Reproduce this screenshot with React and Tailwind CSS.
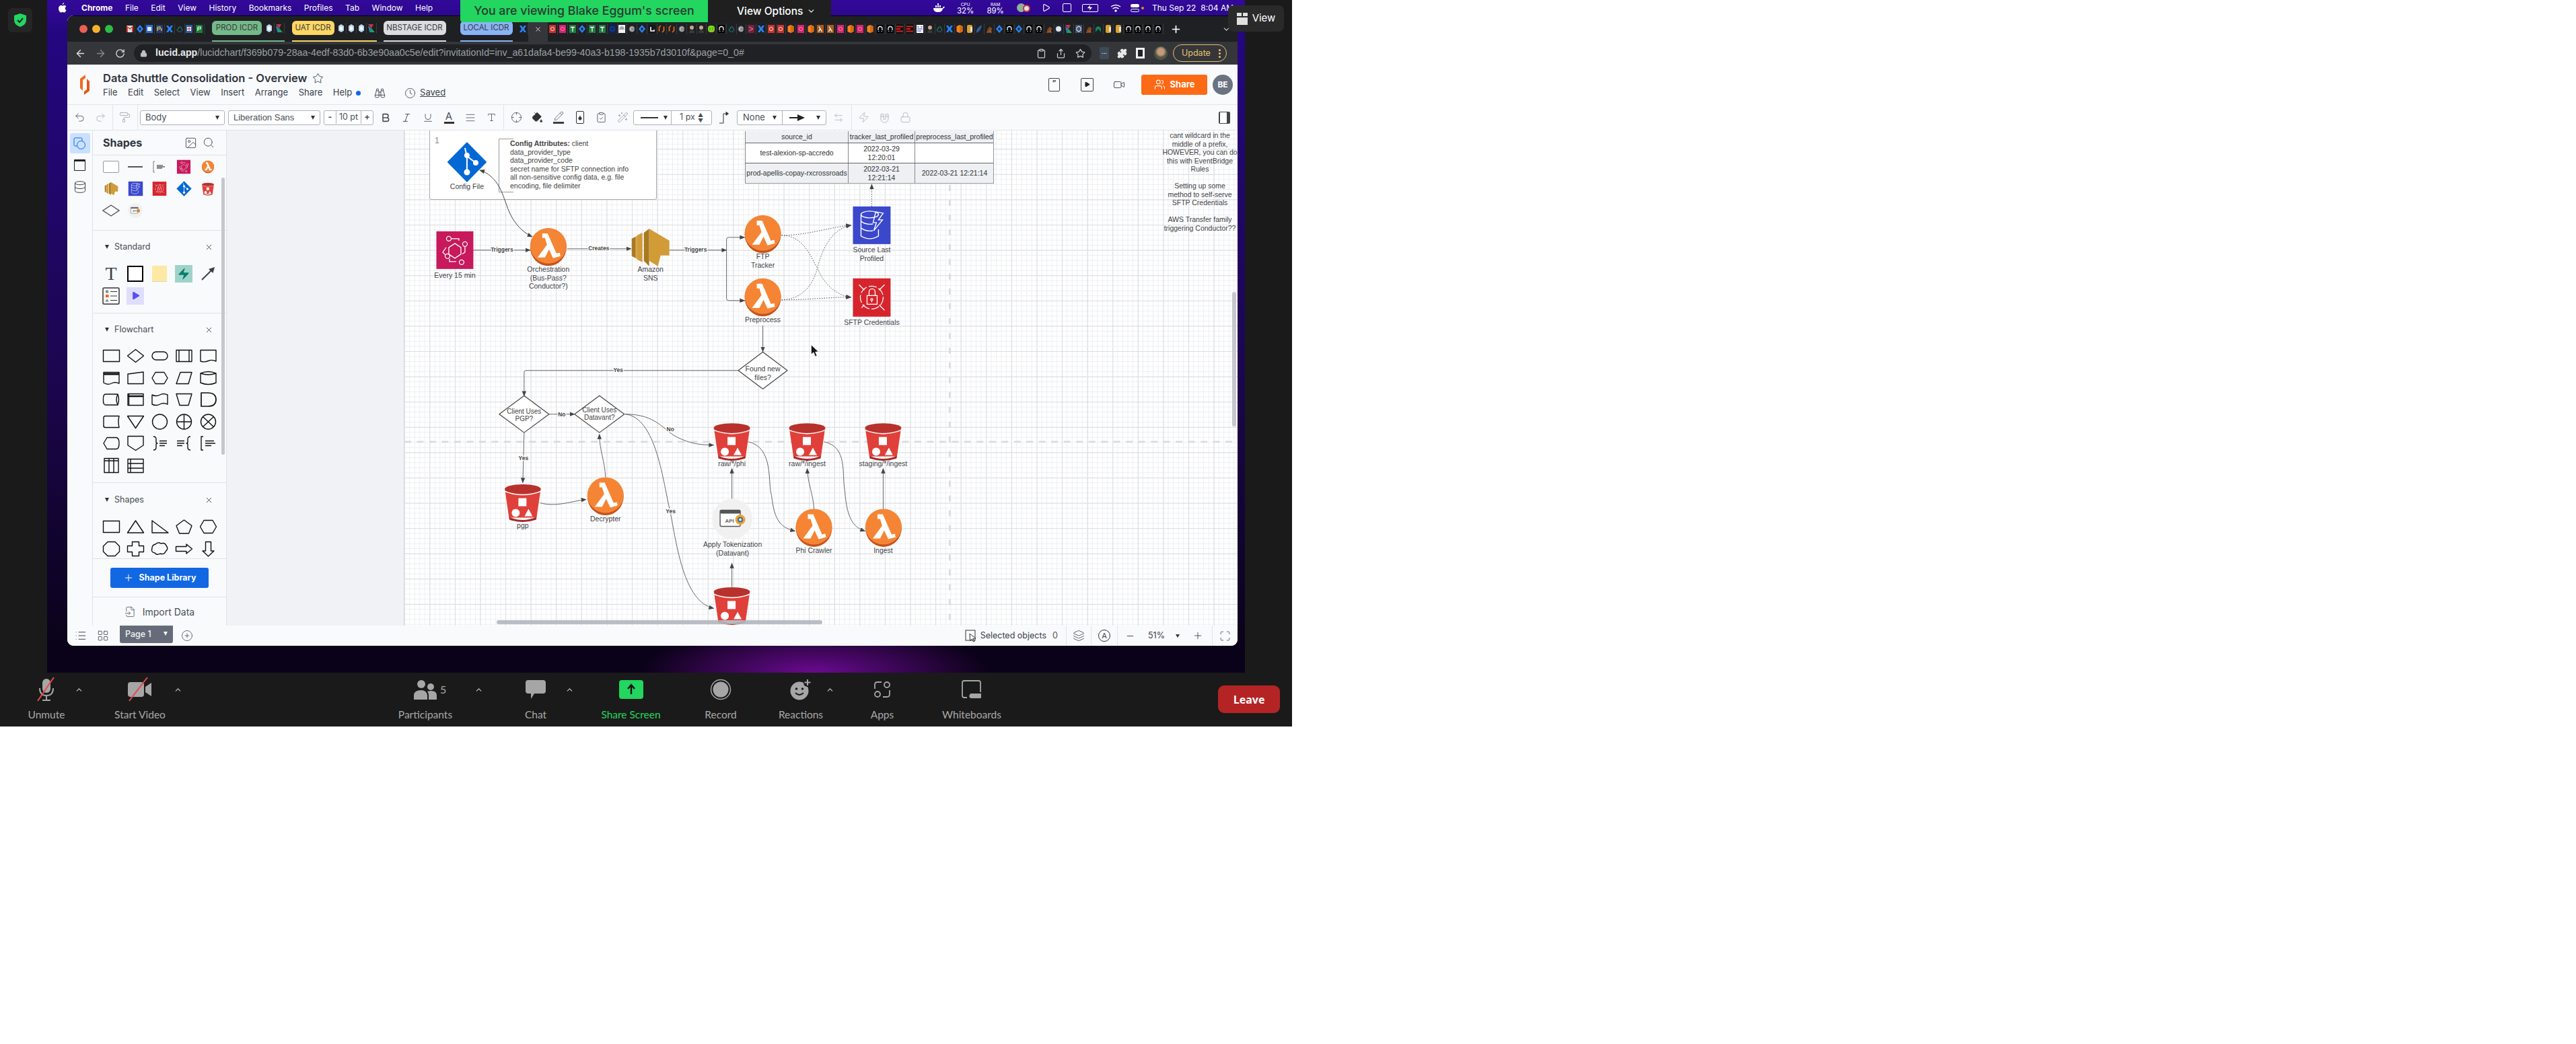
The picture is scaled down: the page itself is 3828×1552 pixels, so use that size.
import React from 'react';
import { ArrowLeft, ArrowRight, RotateCw, Lock, Clipboard, Share, Star, Puzzle, Plus, ChevronDown, ChevronUp, Undo2, Redo2, PaintRoller, Bold, Italic, Underline, AlignJustify, Type, Crosshair, PaintBucket, Pencil, Droplet, ClipboardCheck, WandSparkles, ArrowLeftRight, Zap, Magnet, PanelRight, Video, Play, Users, Binoculars, Clock, Image, Search, X, List, LayoutGrid, CirclePlus, Layers, Minus, Maximize, Database, FileInput, Lock as LockIcon } from 'lucide-react';

const Fav = ({ k }) => {
  const m = {
    aws: <><rect y="1" width="10" height="12" fill="#c7352e" /><circle cx="5" cy="7" r="2.6" fill="none" stroke="#fff" strokeWidth=".8" /></>,
    pink: <><rect y="1" width="10" height="12" fill="#d6246e" /><circle cx="5" cy="7" r="2.6" fill="none" stroke="#f9c" strokeWidth=".8" /></>,
    gt: <><rect y="1" width="10" height="12" fill="#1e7e3e" /><path d="M2 4.500H8M5 4.500V11" stroke="#fff" strokeWidth="1.300" /></>,
    dia: <><path d="M5 1L10 7L5 13L0 7Z" fill="#2684ff" /><path d="M5 4.500L7 7L5 9.500L3 7Z" fill="#202124" /></>,
    navy: <><rect y="1" width="10" height="12" rx="1" fill="#0c2460" /><circle cx="5" cy="7" r="3" fill="none" stroke="#1c3f96" strokeWidth="1.400" /></>,
    cloud: <><rect y="1" width="10" height="12" fill="#f1f1f1" /><path d="M1 8Q2 3 5 3Q8 3 9 8Z" fill="#a8a8a8" /></>,
    e: <><circle cx="5" cy="7" r="4.500" fill="#5f6368" /><path d="M8 5.500A3 3 0 1 0 8 8.800M3 7H8" stroke="#ddd" strokeWidth="1.100" fill="none" /></>,
    l: <><rect y="1" width="10" height="12" fill="#16171a" /><path d="M3 4V10H8V8" stroke="#fff" strokeWidth="1.600" fill="none" /></>,
    lucid: <path d="M4 2L1.500 4.500V10.500M6 12L8.500 9.500V3.500" stroke="#f06a1a" strokeWidth="1.700" fill="none" />,
    face: <><circle cx="5" cy="5" r="3" fill="#c7a68c" /><path d="M1 13Q1 8.500 5 8.500Q9 8.500 9 13Z" fill="#3a3a3a" /></>,
    green: <><rect y="2" width="10" height="10" rx="4" fill="#7ed321" /><path d="M3 5V9M7 5V9" stroke="#4a9a10" /></>,
    gh: <><rect y="1" width="10" height="12" fill="#060606" /><path d="M2 9V6.500A3 3 0 0 1 8 6.500V9" stroke="#eee" strokeWidth="1.300" fill="none" /><path d="M2 10.500H3.500M6.500 10.500H8" stroke="#bbb" /></>,
    teal: <path d="M1 10Q4 3 6 4T9 10M2 11H8" stroke="#1d7a6e" strokeWidth="1.200" fill="none" />,
    maroon: <><rect y="1" width="10" height="12" fill="#7a1f3d" /><path d="M2 4L8 7L2 10" stroke="#d9a" fill="none" /></>,
    x: <path d="M0 2H3L5 5L7 2H10L7 7L10 12H7L5 9L3 12H0L3 7Z" fill="#2684ff" />,
    cyl: <><path d="M5 1L9.500 3V11L5 13L.5 11V3Z" fill="#f5821f" /><path d="M5 1L9.500 3V11L5 13Z" fill="#d86a10" /></>,
    lam: <><rect y="1" width="10" height="12" fill="#a85c1c" /><path d="M3 3.500L7.500 11M5 6.500L2.500 11" stroke="#fff" strokeWidth="1.300" fill="none" /></>,
    red: <><rect width="10" height="14" y="0" fill="#111" /><path d="M0 3.500H10M0 7H6M0 10.500H10" stroke="#d8201f" strokeWidth="2" /></>,
    white: <><rect y="1" width="10" height="12" fill="#fff" /><path d="M1 4H4M6 4H9M1 7H9M1 10H7" stroke="#2238a8" strokeWidth="1.200" /></>,
    can: <><rect y="1" x="1" width="8" height="12" rx="2" fill="#d8a02a" /><rect y="4" x="6" width="3" height="7" fill="#e4e4e4" /></>,
    feather: <path d="M9 1Q8 10 1 13Q0 6 9 1Z" fill="#2f5f9e" />,
    stack: <path d="M1 12H9M2 10L8 10.500M2.500 8L8 9.500M3.500 6L8.500 8M5 4L9 7" stroke="#e0702a" strokeWidth="1" fill="none" />,
    py: <><rect y="1" width="10" height="12" fill="#1f2b3a" /><circle cx="5" cy="7" r="4" fill="#dfe5ea" /></>,
    multi: <><path d="M0 1L8 1L5 7Z" fill="#c43a3a" /><path d="M0 3L5 7L2 13Z" fill="#3a7ac4" /><path d="M5 7L10 13H2Z" fill="#22a060" /></>,
    hex: <><rect y="1" width="10" height="12" fill="#41546e" /><path d="M5 3L8 5V9L5 11L2 9V5Z" fill="none" stroke="#dde" strokeWidth="1.100" /></>,
    n: <path d="M1 12V6Q5 0 9 6V12L5 7Z" fill="#15805f" />,
    gmail: <><rect y="2" width="10" height="10" fill="#ddd" /><path d="M0 2V12H2V5L5 8L8 5V12H10V2L5 6Z" fill="#d93a2e" /></>,
    cal: <><rect y="1" width="10" height="12" fill="#2a6fd6" /><rect x="2" y="4" width="6" height="6" fill="#dce8ff" /></>,
    yp: <><rect y="1" width="10" height="12" fill="#273a78" /><path d="M2 4V10M2 4H6V7H2M8 6V10" stroke="#f0d24a" strokeWidth="1.200" fill="none" /></>,
    pg: <><rect y="1" width="10" height="12" fill="#188038" /><path d="M3 4V10M3 4H7V7H3" stroke="#fff" strokeWidth="1.200" fill="none" /></>,
    tb: <><rect y="1" width="10" height="12" fill="#2d5da8" /><path d="M2 4H8V10H2Z" fill="#fff" /><path d="M5 4V10M2 7H8" stroke="#c33" /></>,
    hexb: <><path d="M5 1L9 3.500V10.500L5 13L1 10.500V3.500Z" fill="#bcd8ef" /><path d="M5 4L7 6V9L5 10L3 9V6Z" fill="#fff" /></>,
  };
  return (
    <span className="w-[14.75px] h-[16px] shrink-0 flex items-center justify-center border-r border-[#3a3b3e]">
      <svg width="10" height="14" viewBox="0 0 10 14">{m[k]}</svg>
    </span>
  );
};

const favsA = ['gmail','dia','cal','yp','x','teal','tb','pg'];
const favsB = ['aws','pink','gt','dia','gt','gt','navy','cloud','e','dia','l','lucid','lucid','e','face','face','green','gh','teal','e','maroon','x','aws','aws','cyl','pink','cyl','lam','lam','pink','cyl','pink','cyl','gh','gh','red','red','white','face','teal','x','cyl','can','feather','stack','dia','gh','dia','gh','gh','stack','py','multi','hex','stack','n','can','can','gh','gh','gh','gh'];

const TabGroup = ({ label, pill, line, w, icons = [] }) => (
  <div className={`h-full flex items-center border-b-2 ${line}`}>
    <div className={`h-[21px] ${w} ${pill} rounded-[6px] flex items-center justify-center text-[#3a3a3a] text-[11.5px] whitespace-nowrap mb-[1px]`}>{label}</div>
    {icons.length > 0 && <div className="flex ml-[4px]">{icons.map((k, i) => <Fav key={i} k={k} />)}</div>}
  </div>
);

const TabStrip = () => (
  <div className="h-[39px] bg-[#1f2023] rounded-t-[9px] border-t border-[#000] flex items-center text-white shrink-0">
    <div className="flex gap-[7px] ml-[18px]">
      <span className="w-[12px] h-[12px] rounded-full bg-[#ec5f56]" />
      <span className="w-[12px] h-[12px] rounded-full bg-[#f4b22c]" />
      <span className="w-[12px] h-[12px] rounded-full bg-[#2fbb45]" />
    </div>
    <div className="flex ml-[18px]">{favsA.map((k, i) => <Fav key={i} k={k} />)}</div>
    <div className="ml-[11px] h-full"><TabGroup label="PROD ICDR" pill="bg-[#74b98a]" line="border-[#74b98a]" w="w-[74px]" icons={['hexb','multi']} /></div>
    <div className="ml-[11px] h-full"><TabGroup label="UAT ICDR" pill="bg-[#fdd663]" line="border-[#fdd663]" w="w-[63px]" icons={['hexb','hexb','hexb','multi']} /></div>
    <div className="ml-[10px] h-full"><TabGroup label="NBSTAGE ICDR" pill="bg-[#dadce0]" line="border-[#dadce0]" w="w-[93px]" /></div>
    <div className="ml-[21px] h-full"><TabGroup label="LOCAL ICDR" pill="bg-[#8ab4f8]" line="border-[#8ab4f8]" w="w-[78px]" /></div>
    <div className="ml-[9px]"><Fav k="x" /></div>
    <div className="h-full w-[29px] bg-[#35363a] rounded-t-[7px] flex items-center justify-center"><X size={11} strokeWidth={2} className="text-[#e8eaed]" /></div>
    <div className="flex">{favsB.map((k, i) => <Fav key={i} k={k} />)}</div>
    <Plus size={17} strokeWidth={2.4} className="ml-[10px] text-white" />
    <ChevronDown size={13} strokeWidth={2.2} className="ml-[60px] text-[#d0d0d0]" />
  </div>
);

const AddressBar = () => (
  <div className="h-[34px] bg-[#35363a] flex items-center text-[#dfe1e5] shrink-0">
    <div className="flex items-center ml-[11px] gap-[13px]">
      <ArrowLeft size={17} />
      <ArrowRight size={17} className="text-[#85878b]" />
      <RotateCw size={15} />
    </div>
    <div className="ml-[13px] w-[1423px] h-[26px] rounded-full bg-[#202124] flex items-center pl-[9px] text-[14.2px] [font-family:'Liberation_Sans',sans-serif]">
      <Lock size={11} className="text-[#bdc1c6] mr-[12px]" fill="#bdc1c6" />
      <span className="whitespace-nowrap"><span className="text-[#e8eaed] font-bold">lucid.app</span><span className="text-[#9aa0a6]">/lucidchart/f369b079-28aa-4edf-83d0-6b3e90aa0c5e/edit?invitationId=inv_a61dafa4-be99-40a3-b198-1935b7d3010f&amp;page=0_0#</span></span>
      <div className="ml-auto flex items-center gap-[14px] pr-[9px] text-[#c8cacd]">
        <Clipboard size={15} />
        <Share size={15} />
        <Star size={15} />
      </div>
    </div>
    <div className="ml-[12px] w-[14px] h-[18px] bg-[#3f4a58] rounded-[2px] flex items-center justify-center text-[8px] leading-none text-white font-bold">···</div>
    <Puzzle size={15} className="ml-[12px] text-[#e8e8e8]" fill="#e8e8e8" />
    <span className="ml-[13px] w-[13px] h-[16px] border-[3px] border-[#f2f2f2] bg-[#202124]" />
    <span className="ml-[14px] w-[20px] h-[20px] rounded-full bg-[radial-gradient(circle_at_50%_40%,#c49a78_0,#c49a78_30%,#4a5240_55%,#6a6a5a_100%)]" />
    <div className="ml-[8px] w-[80px] h-[26px] rounded-full border border-[#e0c36c] flex items-center justify-between pl-[12px] pr-[8px] text-[#e6c46a] text-[12.5px]">
      <span>Update</span>
      <span className="flex flex-col gap-[2px]"><i className="block w-[3px] h-[3px] rounded-full bg-[#e6c46a]" /><i className="block w-[3px] h-[3px] rounded-full bg-[#e6c46a]" /><i className="block w-[3px] h-[3px] rounded-full bg-[#e6c46a]" /></span>
    </div>
  </div>
);

const LucidHeader = () => (
  <div className="h-[60px] bg-[#f9fafc] border-b border-[#e2e4ea] flex shrink-0 text-[#3a414a]">
    <div className="w-[53px] flex items-center justify-center pr-[2px]">
      <svg width="20" height="36" viewBox="0 0 20 36"><path d="M11 3L3 9V23L7 27V11L11 8Z" fill="#f26b1d" /><path d="M9 33L17 27V13L13 9V25L9 28Z" fill="#e2591a" /></svg>
    </div>
    <div className="flex flex-col pt-[8px]">
      <div className="h-[24px] flex items-center gap-[8px]">
        <span className="text-[16.500px] font-semibold text-[#2f353d] whitespace-nowrap">Data Shuttle Consolidation - Overview</span>
        <Star size={17} strokeWidth={1.3} className="text-[#3a414a]" />
      </div>
      <div className="h-[20px] flex items-center gap-[15.500px] text-[13px]">
        <span>File</span><span>Edit</span><span>Select</span><span>View</span><span>Insert</span><span>Arrange</span><span>Share</span>
        <span className="flex items-center gap-[6px]">Help<i className="w-[7px] h-[7px] rounded-full bg-[#1068e8]" /></span>
        <Binoculars size={17} strokeWidth={1.3} className="ml-[4px]" />
        <span className="flex items-center gap-[6px] ml-[13px]"><Clock size={17} strokeWidth={1.2} /><span className="underline">Saved</span></span>
      </div>
    </div>
    <div className="ml-auto flex items-center pr-[7px]">
      <div className="w-[17px] h-[20px] border border-[#444] rounded-[2px] flex items-center justify-center text-[11px] font-bold leading-none pb-[4px] mr-[31px]">”</div>
      <div className="w-[19px] h-[20px] border border-[#444] rounded-[2px] flex items-center justify-center mr-[29px]"><Play size={9} fill="#222" className="text-[#222]" /></div>
      <Video size={18} strokeWidth={1.2} className="mr-[24px]" />
      <div className="w-[98px] h-[30px] rounded-[3px] bg-[#fc6a15] text-white font-bold text-[13px] flex items-center justify-center gap-[7px]"><Users size={17} strokeWidth={1.5} /><span>Share</span></div>
      <div className="ml-[8px] w-[30px] h-[30px] rounded-full bg-[#6b7280] text-white font-bold text-[12px] flex items-center justify-center">BE</div>
    </div>
  </div>
);

const Slot = ({ children, w = 'w-[31px]', ml = '' }) => <div className={`${w} ${ml} flex items-center justify-center shrink-0`}>{children}</div>;
const Sep = ({ ml = '' }) => <div className={`w-px h-full bg-[#e2e4ea] shrink-0 ${ml}`} />;
const Tri = () => <span className="w-0 h-0 border-l-[3.500px] border-r-[3.500px] border-t-[6px] border-l-transparent border-r-transparent border-t-[#333]" />;

const Toolbar = () => (
  <div className="h-[38px] bg-[#f9fafc] border-b border-[#e2e4ea] flex items-center shrink-0 text-[#4a4f57] text-[13px]">
    <Slot ml="ml-[2.500px]"><Undo2 size={17} strokeWidth={1.2} /></Slot>
    <Slot><Redo2 size={17} strokeWidth={1.2} className="text-[#aaaeb6]" /></Slot>
    <Sep ml="ml-[2.500px]" />
    <Slot ml="ml-[1.500px]"><PaintRoller size={17} strokeWidth={1.2} className="text-[#9ca0a8]" /></Slot>
    <Sep ml="ml-[3.500px]" />
    <div className="ml-[3px] w-[126px] h-[22px] border border-[#b0b3ba] rounded-[3px] bg-white flex items-center justify-between px-[7px]"><span>Body</span><Tri /></div>
    <div className="ml-[5px] w-[137px] h-[22px] border border-[#b0b3ba] rounded-[3px] bg-white flex items-center justify-between px-[7px] [font-family:'Liberation_Sans',sans-serif]"><span>Liberation Sans</span><Tri /></div>
    <div className="ml-[5px] w-[74px] h-[22px] border border-[#b0b3ba] rounded-[3px] bg-white flex items-center text-[12.500px]"><span className="w-[18px] text-center border-r border-[#b0b3ba] font-bold">-</span><span className="flex-1 text-center whitespace-nowrap">10 pt</span><span className="w-[18px] text-center border-l border-[#b0b3ba] font-bold">+</span></div>
    <Slot ml="ml-[2.500px]"><Bold size={16} strokeWidth={2.4} /></Slot>
    <Slot><Italic size={16} strokeWidth={1.5} /></Slot>
    <Slot ml="ml-[1px]"><Underline size={16} strokeWidth={1.3} /></Slot>
    <Slot><span className="flex flex-col items-center leading-none"><span className="text-[15px]">A</span><i className="block w-[15px] h-[3px] bg-[#333] mt-[1px]" /></span></Slot>
    <Slot ml="ml-[1px]"><AlignJustify size={16} strokeWidth={1.2} /></Slot>
    <Slot><Type size={15} strokeWidth={1.3} /></Slot>
    <Sep ml="ml-[2.500px]" />
    <Slot w="w-[31.600px]" ml="ml-[2.500px]"><Crosshair size={17} strokeWidth={1.2} /></Slot>
    <Slot w="w-[31.600px]"><PaintBucket size={17} strokeWidth={1.4} fill="#333" /></Slot>
    <Slot w="w-[31.600px]"><span className="flex flex-col items-center"><Pencil size={15} strokeWidth={1.2} /><i className="block w-[16px] h-[3px] bg-[#3a4048] mt-[1px]" /></span></Slot>
    <Slot w="w-[31.600px]"><span className="w-[12px] h-[19px] border border-[#333] rounded-[2px] flex items-center justify-center"><Droplet size={8} fill="#333" /></span></Slot>
    <Slot w="w-[31.600px]"><ClipboardCheck size={17} strokeWidth={1.2} /></Slot>
    <Slot w="w-[31.600px]"><WandSparkles size={17} strokeWidth={1.1} className="text-[#8d9199]" /></Slot>
    <div className="w-[117px] h-[22px] border border-[#b0b3ba] rounded-[3px] bg-white flex items-center shrink-0">
      <div className="w-[56px] h-full flex items-center justify-between pl-[10px] pr-[5px] border-r border-[#b0b3ba]"><i className="block w-[26px] h-[2px] bg-[#333]" /><Tri /></div>
      <span className="flex-1 text-center text-[12.500px] whitespace-nowrap flex items-center justify-center gap-[4px]">1 px<span className="text-[8px] leading-[8px] flex flex-col"><i className="not-italic">▲</i><i className="not-italic">▼</i></span></span>
    </div>
    <Slot ml="ml-[2.500px]"><svg width="18" height="20" viewBox="0 0 18 20" fill="none" stroke="#333"><path d="M2 18H8V4H14" /><path d="M12 1.500L15.500 4L12 6.500Z" fill="#333" /></svg></Slot>
    <div className="ml-[3.500px] w-[133px] h-[22px] border border-[#b0b3ba] rounded-[3px] bg-white flex items-center shrink-0">
      <div className="w-[67px] h-full flex items-center justify-between px-[8px] border-r border-[#b0b3ba]"><span>None</span><Tri /></div>
      <div className="flex-1 h-full flex items-center justify-between pl-[10px] pr-[8px]"><svg width="24" height="10" viewBox="0 0 24 10"><path d="M0 5H14" stroke="#222" strokeWidth="2" /><path d="M12 0L23 5L12 10Z" fill="#222" /></svg><Tri /></div>
    </div>
    <Slot ml="ml-[2.500px]"><ArrowLeftRight size={16} strokeWidth={1.1} className="text-[#a7abb2]" /></Slot>
    <Sep ml="ml-[3.500px]" />
    <Slot ml="ml-[1.500px]"><Zap size={17} strokeWidth={1.1} className="text-[#a7abb2]" /></Slot>
    <Slot><Magnet size={17} strokeWidth={1.1} className="text-[#a7abb2] rotate-[135deg]" /></Slot>
    <Slot><LockIcon size={17} strokeWidth={1.1} className="text-[#a7abb2]" /></Slot>
    <div className="ml-auto mr-[11px] w-[17px] h-[18px] border border-[#444] border-l-[2px] border-r-[5px] rounded-[2px] bg-white" />
  </div>
);

/* ---------- diagram icons, centred on 0,0 ---------- */
const Lambda = () => (
  <g>
    <ellipse cx="0" cy="0.500" rx="27" ry="28" fill="#c5521c" />
    <ellipse cx="0" cy="-1.500" rx="27" ry="26.500" fill="#f58534" />
    <path d="M-9 -20L-1 -20L12 10L17 9L18 14L7 17L1 4L-5 16L-16 16L-2 -3L-5 -13L-9 -13Z" fill="#fff" />
  </g>
);
const Bucket = () => (
  <g transform="translate(-27.500,-28)">
    <path d="M1 9L7 50H48L54 9Z" fill="#e0403a" />
    <path d="M7 49Q27.500 58 48 49L47.500 53Q27.500 60 7.500 53Z" fill="#a82a26" />
    <path d="M1 11Q27.500 21 54 11" stroke="#fff" strokeWidth="1.500" fill="none" />
    <ellipse cx="27.500" cy="7.500" rx="27" ry="7" fill="#b8322d" />
    <rect x="21" y="21" width="12" height="12" fill="#fff" />
    <circle cx="17" cy="43" r="6" fill="#fff" />
    <path d="M36 37L42 48H30Z" fill="#fff" />
  </g>
);
const EventIcon = () => (
  <g>
    <rect x="-27.500" y="-28" width="55" height="56" fill="#c7195b" />
    <g fill="none" stroke="#fff" strokeWidth="1.300">
      <path d="M0 -10L9 -4V6L0 12L-9 6V-4Z" />
      <circle cx="-9" cy="-17" r="3.500" /><circle cx="15" cy="-9" r="3.500" /><circle cx="-11" cy="9" r="3.500" /><circle cx="10" cy="18" r="3.500" />
      <path d="M-5 -17H6V-14M15 -5V3L11 6M-13 -4L-18 3L-14 7M-8 13V17H2" />
    </g>
  </g>
);
const SNSIcon = () => (
  <g>
    <path d="M-10 -22L-2 -28V28L-10 20Z" fill="#a87a20" />
    <path d="M-2 -28L28 -10V12L15 12L11 28L-2 20Z" fill="#d19b38" />
    <path d="M-20 -18L-12 -22V22L-20 18Z" fill="#d19b38" />
    <path d="M-28 -13L-22 -16V16L-28 13Z" fill="#a87a20" />
    <path d="M-22 -16L-20 -17V17L-22 16Z" fill="#d19b38" />
  </g>
);
const DynamoIcon = () => (
  <g>
    <rect x="-28" y="-28" width="56" height="56" fill="#3b48cc" />
    <g fill="none" stroke="#fff" strokeWidth="1.400">
      <ellipse cx="-3" cy="-16" rx="13" ry="5" />
      <path d="M-16 -16V16Q-3 24 10 16V6M-16 -6Q-8 0 2 -2M-16 4Q-8 10 2 8" />
      <path d="M6 -20L17 -18L10 -8L16 -8L3 8L7 -4L2 -4Z" />
    </g>
  </g>
);
const SecretsIcon = () => (
  <g>
    <rect x="-28" y="-28.500" width="56" height="57" fill="#d6242d" />
    <g fill="none" stroke="#fff" strokeWidth="1.300">
      <circle cx="0" cy="0" r="17" strokeDasharray="12 3" />
      <path d="M-19 -19L-11 -11M19 -19L11 -11M-15 15L-11 11M19 19L11 11" />
      <rect x="-7" y="-3" width="15" height="13" />
      <path d="M-4 -3V-8A4.500 5 0 0 1 5 -8V-3" />
      <circle cx="0" cy="3" r="1.500" /><path d="M0 5V7" />
    </g>
  </g>
);
const GitIcon = () => (
  <g>
    <path d="M0 -28.500L28 0L0 28.500L-28 0Z" fill="#0468d4" stroke="#0468d4" strokeWidth="2" strokeLinejoin="round" />
    <path d="M-3 -21L0 -8L0 15M1 -8L13 1" stroke="#fff" strokeWidth="2" fill="none" />
    <circle cx="0" cy="-10" r="4" fill="#fff" /><circle cx="13" cy="1" r="4" fill="#fff" /><circle cx="0" cy="15" r="4.500" fill="#fff" />
  </g>
);
const ApiIcon = () => (
  <g>
    <ellipse cx="0" cy="0" rx="30" ry="30" fill="#f1f1f1" />
    <rect x="-18" y="-13" width="30" height="24" rx="2" fill="#fff" stroke="#555" strokeWidth="1.400" />
    <rect x="-18" y="-13" width="30" height="5" rx="1.500" fill="#555" />
    <text x="-4" y="5" fontSize="8" fontWeight="700" fill="#666" textAnchor="middle">API</text>
    <circle cx="12" cy="1" r="7.500" fill="#f0a030" /><circle cx="12" cy="1" r="4" fill="#2f6ea8" /><circle cx="12" cy="1" r="2" fill="#f1f1f1" />
  </g>
);
const Mini = ({ w = 22, h = 22, vb = '-30 -30 60 60', children }) => <svg width={w} height={h} viewBox={vb}>{children}</svg>;

/* ---------- sidebar ---------- */
const Sh = ({ children }) => (
  <svg width="27" height="24" viewBox="0 0 27 24" fill="none" stroke="#111" strokeWidth="1.400" strokeLinejoin="round">{children}</svg>
);
const flowShapes = [
  <rect x="1.500" y="3.500" width="24" height="17" />,
  <path d="M13.500 2.500L25.500 12L13.500 21.500L1.500 12Z" />,
  <rect x="2" y="6" width="23" height="12" rx="6" />,
  <><rect x="2" y="3.500" width="23" height="17" /><path d="M6 3.500V20.500M21 3.500V20.500" /></>,
  <path d="M2 3.500H25V20Q19 17 13.500 19.500T2 20Z" />,
  <><path d="M2 3.500H25V20Q19 17 13.500 20T2 19Z" /><path d="M2 6H25" strokeWidth="3" /></>,
  <path d="M2 6L25 3V20.500H2Z" />,
  <path d="M7 3.500H20L25 12L20 20.500H7L2 12Z" />,
  <path d="M8 3.500H25L20 20.500H2Z" />,
  <path d="M2 5Q13.500 0 25 5V19Q13.500 24 2 19ZM2 5Q13.500 9 25 5" />,
  <path d="M5 4H23Q26 12 23 20H5Q1 20 1.500 12Q1 4 5 4ZM23 4Q19 12 23 20" />,
  <><rect x="2" y="3.500" width="23" height="17" /><path d="M2 7H25" strokeWidth="2.500" /><path d="M3.500 3.500V20.500" /></>,
  <path d="M2 5Q8 8 13.500 5T25 5V19Q19 16 13.500 19T2 19Z" />,
  <path d="M2 3.500H25L20 20.500H7Z" />,
  <path d="M3 2H13Q25 2 25 12Q25 22 13 22H3Z" strokeWidth="1.700" />,
  <path d="M4 3.500H25Q23 12 25 20.500H4Q1.500 20 2 17V7Q1.500 4 4 3.500Z" />,
  <path d="M1.500 3.500H25.500L13.500 21.500Z" />,
  <circle cx="13.500" cy="12" r="11" />,
  <><circle cx="13.500" cy="12" r="11" /><path d="M13.500 1V23M2.500 12H24.500" /></>,
  <><circle cx="13.500" cy="12" r="11" /><path d="M5.500 4.500L21.500 19.500M21.500 4.500L5.500 19.500" /></>,
  <path d="M7 3.500H21Q25 4 25 12Q25 20 21 20.500H7L2 12Z" />,
  <path d="M2 1.500H25V15L13.500 22.500L2 15Z" />,
  <><path d="M4 2Q8 2 8 6V10Q8 12 10 12Q8 12 8 14V18Q8 22 4 22" /><path d="M13 8.500H24M13 12H24M13 15.500H21" strokeWidth="1.600" /></>,
  <><path d="M23 2Q19 2 19 6V10Q19 12 17 12Q19 12 19 14V18Q19 22 23 22" /><path d="M3 8.500H14M3 12H14M3 15.500H11" strokeWidth="1.600" /></>,
  <><path d="M6 2H3V22H6" /><path d="M9 8.500H22M9 12H24M9 15.500H18" strokeWidth="1.600" /></>,
  <><rect x="3" y="1.500" width="21" height="21" /><path d="M3 5H24M10 1.500V22.500M17 1.500V22.500" /></>,
  <><rect x="2" y="2.500" width="23" height="20" /><path d="M2 9H25M2 16H25M6 2.500V22.500" /></>,
];
const basicShapes = [
  <rect x="1.500" y="3.500" width="24" height="17" />,
  <path d="M13.500 3L25.500 21H1.500Z" />,
  <path d="M2 3L26 21H2Z" />,
  <path d="M13.500 2L25 10.500L20.500 22H6.500L2 10.500Z" />,
  <path d="M7 2.500H20L25.500 12L20 21.500H7L1.500 12Z" />,
  <path d="M8 1.500H19L25.500 8V16L19 22.500H8L1.500 16V8Z" />,
  <path d="M8.500 1.500H18.500V7.500H25.500V16.500H18.500V22.500H8.500V16.500H1.500V7.500H8.500Z" />,
  <path d="M7 5Q11 1 15 4Q21 2 23 7Q27 12 22 16Q20 21 14 19Q9 22 6 18Q0 17 2 11Q2 6 7 5Z" />,
  <path d="M1.500 8.500H17V5L25.500 12L17 19V15.500H1.500Z" />,
  <path d="M9.500 1.500H17.500V15H22L13.500 23L5 15H9.500Z" />,
];
const Cell = ({ children }) => <div className="flex items-center justify-center h-[32.500px]">{children}</div>;
const Head = ({ title, extra = '' }) => (
  <div className={`h-[48px] flex items-center pl-[18px] text-[12.500px] text-[#464b53] ${extra}`}>
    <Tri />
    <span className="ml-[8px]">{title}</span>
    <X size={13} strokeWidth={1.6} className="ml-auto mr-[19px] text-[#333]" />
  </div>
);

const ShapePanel = () => (
  <div className="w-[237px] h-full flex shrink-0 relative">
    <div className="w-[38px] border-r border-[#dfe1e7] flex flex-col items-center shrink-0">
      <div className="mt-[4px] w-[30px] h-[30px] bg-[#c9e0ff] rounded-[3px] flex items-center justify-center">
        <svg width="19" height="19" viewBox="0 0 19 19" fill="none" stroke="#1766e0"><rect x="1" y="1" width="12" height="12" rx="1.500" /><circle cx="11.500" cy="11.500" r="6" fill="#c9e0ff" /></svg>
      </div>
      <div className="mt-[9px] w-[17px] h-[17px] border border-[#222] border-t-[3px] rounded-[1px]" />
      <Database size={20} strokeWidth={1.1} className="mt-[14px] text-[#333]" />
    </div>
    <div className="w-[199px] flex flex-col bg-[#f9fafc] border-r border-[#dfe1e7]">
      <div className="h-[37px] shrink-0 border-b border-[#dfe1e7] flex items-center pl-[15px] pr-[17px]">
        <span className="text-[16px] font-bold text-[#2f353d]">Shapes</span>
        <Image size={19} strokeWidth={1.1} className="ml-auto text-[#444]" />
        <Search size={18} strokeWidth={1.2} className="ml-[8px] text-[#444]" />
      </div>
      <div className="h-[112px] shrink-0 border-b border-[#dfe1e7] pl-[9px] pt-[1px]">
        <div className="grid grid-cols-[repeat(5,36px)]">
          <Cell><span className="w-[24px] h-[18px] border-[1.500px] border-[#999] bg-white rounded-[2px]" /></Cell>
          <Cell><span className="w-[22px] h-[2px] bg-[#555]" /></Cell>
          <Cell><svg width="20" height="18" viewBox="0 0 20 18" fill="none" stroke="#777"><path d="M3 1H1V17H3" /><path d="M6 7H15M6 9H18M6 11H14" stroke="#222" strokeWidth="1.200" /></svg></Cell>
          <Cell><Mini><EventIcon /></Mini></Cell>
          <Cell><Mini w={20} h={20}><Lambda /></Mini></Cell>
          <Cell><Mini w={21} h={21}><SNSIcon /></Mini></Cell>
          <Cell><Mini w={23} h={23}><DynamoIcon /></Mini></Cell>
          <Cell><Mini w={22} h={23}><SecretsIcon /></Mini></Cell>
          <Cell><Mini w={23} h={23}><GitIcon /></Mini></Cell>
          <Cell><Mini w={20} h={20}><Bucket /></Mini></Cell>
          <Cell><svg width="26" height="20" viewBox="0 0 26 20" fill="none" stroke="#555" strokeWidth="1.400"><path d="M13 2L25 10L13 18L1 10Z" /></svg></Cell>
          <Cell><Mini><ApiIcon /></Mini></Cell>
        </div>
      </div>
      <div className="h-[123px] shrink-0 border-b border-[#dfe1e7]">
        <Head title="Standard" />
        <div className="pl-[9px] grid grid-cols-[repeat(5,36px)]">
          <Cell><span className="text-[28px] leading-none text-[#3a414a] [font-family:'Liberation_Serif',serif]">T</span></Cell>
          <Cell><span className="w-[24px] h-[24px] border-2 border-black bg-white" /></Cell>
          <Cell><span className="w-[22px] h-[24px] bg-[#fde9a3] border-b border-[#d9dca6]" /></Cell>
          <Cell><span className="w-[26px] h-[26px] bg-[#9fd3c9] flex items-center justify-center"><Zap size={20} fill="#0a7f6a" strokeWidth={0} /></span></Cell>
          <Cell><svg width="22" height="22" viewBox="0 0 22 22"><path d="M2 20L17 5" stroke="#3a414a" strokeWidth="2" /><path d="M21 1L18.500 10L12 4Z" fill="#3a414a" /></svg></Cell>
          <Cell><svg width="26" height="26" viewBox="0 0 26 26" fill="none"><rect x="1" y="1" width="24" height="24" rx="1.500" stroke="#333" strokeWidth="1.500" /><circle cx="7" cy="6.500" r="2.200" fill="#888" /><path d="M12 6.500H22M12 13H22M12 19.500H22" stroke="#333" /><rect x="5" y="11" width="4.500" height="4" fill="#f4601a" /><path d="M7 17L9.500 21.500H4.500Z" fill="#888" /></svg></Cell>
          <Cell><span className="w-[26px] h-[26px] bg-[#e0deff] flex items-center justify-center"><Play size={15} fill="#5a50f0" strokeWidth={0} /></span></Cell>
        </div>
      </div>
      <div className="h-[252px] shrink-0 border-b border-[#dfe1e7]">
        <Head title="Flowchart" />
        <div className="pl-[9px] grid grid-cols-[repeat(5,36px)] -mt-[1px]">
          {flowShapes.map((s, i) => <Cell key={i}><Sh>{s}</Sh></Cell>)}
        </div>
      </div>
      <div className="h-[113px] shrink-0 border-b border-[#dfe1e7] overflow-hidden">
        <Head title="Shapes" extra="mt-[1px]" />
        <div className="pl-[9px] grid grid-cols-[repeat(5,36px)]">
          {basicShapes.map((s, i) => <Cell key={i}><Sh>{s}</Sh></Cell>)}
        </div>
      </div>
      <div className="h-[57px] shrink-0 border-b border-[#dfe1e7] flex items-center justify-center">
        <div className="w-[146px] h-[30px] rounded-[3px] bg-[#1267e3] text-white text-[12.500px] font-bold flex items-center justify-center gap-[8px]"><Plus size={16} strokeWidth={1.500} /><span>Shape Library</span></div>
      </div>
      <div className="flex-1 flex items-center justify-center gap-[10px] text-[14px] text-[#4a4f57]"><FileInput size={17} strokeWidth={1.100} /><span>Import Data</span></div>
    </div>
    <div className="absolute left-[229px] top-[70px] w-[5px] h-[412px] rounded-full bg-[#c5c7cd]" />
  </div>
);

/* ---------- canvas ---------- */
const paths = [
  ['M702 372H787'], ['M842 370H937'], ['M994 372H1079'],
  ['M1079 372V356Q1079 353 1082 353H1106'], ['M1079 372V444Q1079 447 1082 447H1106'],
  ['M1133 484V523'],
  ['M1097 551H781Q778 551 778 554V589'],
  ['M815 616H853'],
  ['M928 616C975 616 985 640 1005 650C1025 660 1040 662 1060 662'],
  ['M928 616C975 620 985 720 995 760C1005 810 1015 895 1060 905'],
  ['M778 644L776 718'],
  ['M802 748C825 755 850 745 870 743'],
  ['M899 710C898 685 890 670 890 646'],
  ['M1111 657C1150 665 1140 720 1146 737C1150 775 1160 785 1181 790'],
  ['M1224 657C1260 665 1250 705 1255 730C1258 775 1270 785 1285 790'],
  ['M1209 757C1208 735 1200 720 1199 697'],
  ['M1312 757V697'], ['M1087 742V697'], ['M1087 873V838'],
];
const dotted = [
  'M1161 350C1200 350 1230 338 1264 335',
  'M1161 350C1195 350 1205 385 1215 400C1225 425 1245 440 1264 442',
  'M1161 446C1200 445 1212 410 1215 395C1225 360 1240 340 1264 335',
  'M1161 446C1200 446 1230 442 1264 442',
  'M1295 307V274',
];
const diamonds = [
  [1133, 551, 36.500, 27.500, ['Found new', 'files?'], -2, 11, 10.500],
  [778, 616, 37, 27.500, ['Client Uses', 'PGP?'], -4, 7, 10],
  [890, 616, 37, 27.500, ['Client Uses', 'Datavant?'], -6, 5, 10],
];
const nodeLabels = [
  [693, 278, 'Config File'], [675, 410, 'Every 15 min'], [814, 401, 'Orchestration'], [814, 413.500, '(Bus-Pass?'], [814, 426, 'Conductor?)'],
  [966, 401, 'Amazon'], [966, 413.500, 'SNS'], [1133, 382, 'FTP'], [1133, 394.500, 'Tracker'], [1133, 476, 'Preprocess'],
  [1295, 372, 'Source Last'], [1295, 385, 'Profiled'], [1295, 480, 'SFTP Credentials'],
  [1087, 690, 'raw/*/phi'], [1199, 690, 'raw/*/ingest'], [1312, 690, 'staging/*/ingest'], [776, 782, 'pgp'], [899, 772, 'Decrypter'],
  [1088, 810, 'Apply Tokenization'], [1088, 823, '(Datavant)'], [1209, 819, 'Phi Crawler'], [1312, 819, 'Ingest'],
  [1783, 202, 'cant wildcard in the'], [1783, 214.500, 'middle of a prefix,'], [1783, 227, 'HOWEVER, you can do'], [1783, 240, 'this with EventBridge'], [1783, 252, 'Rules'],
  [1783, 277, 'Setting up some'], [1783, 290, 'method to self-serve'], [1783, 302, 'SFTP Credentials'], [1783, 327, 'AWS Transfer family'], [1783, 340, 'triggering Conductor??'],
];
const edgeLabels = [[745, 371, 'Triggers'], [889, 369, 'Creates'], [1033, 371, 'Triggers'], [918, 550, 'Yes'], [834, 616, 'No'], [995.500, 638, 'No'], [996, 760, 'Yes'], [777, 681, 'Yes']];
const At = ({ x, y, children }) => <g transform={`translate(${x},${y})`}>{children}</g>;

const Diagram = () => (
  <svg className="absolute inset-0 w-full h-full [font-family:'Liberation_Sans',sans-serif]" viewBox="600 194 1239 736" preserveAspectRatio="xMinYMin meet">
    <defs>
      <marker id="ah" viewBox="0 0 10 10" refX="9" refY="5" markerWidth="8" markerHeight="8" markerUnits="userSpaceOnUse" orient="auto-start-reverse"><path d="M0 1L10 5L0 9Z" fill="#444" /></marker>
    </defs>
    <path d="M600 657H1839" stroke="#d9d9de" strokeWidth="2.500" strokeDasharray="10 8.500" />
    <path d="M1411 275V930" stroke="#d9d9de" strokeWidth="2.500" strokeDasharray="9 13" />
    <g fill="none" stroke="#666" strokeWidth="1">
      <path d="M712 253C740 262 746 290 752 305C760 330 775 345 790 352" stroke="#444" markerStart="url(#ah)" markerEnd="url(#ah)" />
      {paths.map(([d], i) => <path key={i} d={d} markerEnd="url(#ah)" />)}
      {dotted.map((d, i) => <path key={i} d={d} stroke="#555" strokeDasharray="1.500 2" markerEnd="url(#ah)" />)}
    </g>
    <At x={693} y={241}><GitIcon /></At>
    <At x={675} y={372}><EventIcon /></At>
    <At x={814} y={367}><Lambda /></At>
    <At x={966} y={368}><SNSIcon /></At>
    <At x={1133} y={348}><Lambda /></At>
    <At x={1133} y={442}><Lambda /></At>
    <At x={1295} y={335}><DynamoIcon /></At>
    <At x={1295} y={442.500}><SecretsIcon /></At>
    <At x={899} y={738}><Lambda /></At>
    <At x={1209} y={785}><Lambda /></At>
    <At x={1312.500} y={785}><Lambda /></At>
    <At x={1087} y={657}><Bucket /></At>
    <At x={1199} y={657}><Bucket /></At>
    <At x={1312} y={657}><Bucket /></At>
    <At x={776} y={748}><Bucket /></At>
    <At x={1087} y={901}><Bucket /></At>
    <At x={1087.500} y={772}><ApiIcon /></At>
    {diamonds.map(([x, y, a, b, t, d1, d2, fs], i) => (
      <g key={i}>
        <path d={`M${x} ${y - b}L${x + a} ${y}L${x} ${y + b}L${x - a} ${y}Z`} fill="#fff" stroke="#444" strokeWidth="1.200" strokeLinejoin="round" />
        <text x={x} y={y + d1} fontSize={fs} fill="#444" textAnchor="middle" dominantBaseline="central">{t[0]}</text>
        <text x={x} y={y + d2} fontSize={fs} fill="#444" textAnchor="middle" dominantBaseline="central">{t[1]}</text>
      </g>
    ))}
    {nodeLabels.map(([x, y, t], i) => <text key={i} x={x} y={y} fontSize="10.500" fill="#3f4349" textAnchor="middle" dominantBaseline="central">{t}</text>)}
    {edgeLabels.map(([x, y, t], i) => <text key={i} x={x} y={y} fontSize="8.500" fontWeight="600" fill="#444" textAnchor="middle" dominantBaseline="central" stroke="#fff" strokeWidth="2.500" paintOrder="stroke">{t}</text>)}
    <path d="M1205 513V527L1208.500 524L1211 530L1213.500 529L1211 523.500L1215.500 523Z" fill="#111" stroke="#fff" strokeWidth=".6" />
  </svg>
);

const tableRows = [
  { bg: 'bg-[#eef0f4]', h: 'h-[17px]', c: ['source_id', 'tracker_last_profiled', 'preprocess_last_profiled'] },
  { bg: 'bg-white', h: 'h-[30px]', c: ['test-alexion-sp-accredo', ['2022-03-29', '12:20:01'], ''] },
  { bg: 'bg-[#eef0f4]', h: 'h-[30px]', c: ['prod-apellis-copay-rxcrossroads', ['2022-03-21', '12:21:14'], '2022-03-21 12:21:14'] },
];
const colW = ['w-[153px]', 'w-[99px]', 'w-[118px]'];
const DataTable = () => (
  <div className="absolute left-[506px] top-px w-[370px] border-r border-b border-[#999] text-[10.500px] leading-[12.500px] text-[#333] [font-family:'Liberation_Sans',sans-serif]">
    {tableRows.map((r, i) => (
      <div key={i} className={`flex ${r.bg} ${r.h} ${i ? 'border-t border-[#666]' : ''}`}>
        {r.c.map((t, j) => (
          <div key={j} className={`${colW[j]} shrink-0 flex flex-col items-center justify-center whitespace-nowrap overflow-hidden border-l border-[#888]`}>
            {Array.isArray(t) ? t.map((l) => <span key={l}>{l}</span>) : t}
          </div>
        ))}
      </div>
    ))}
  </div>
);
const ConfigBox = () => (
  <div className="absolute left-[37px] -top-[10px] w-[338px] h-[113px] bg-white border border-[#aaa] rounded-[3px] [font-family:'Liberation_Sans',sans-serif] text-[#444]">
    <span className="absolute left-[7px] top-[15px] text-[12px] text-[#888]">1</span>
    <div className="absolute left-[102px] top-[21px] w-[22px] h-[80px] border-l border-t border-b border-[#999] rounded-l-[2px]" />
    <div className="absolute left-[119px] top-[22px] w-[210px] text-[10.500px] leading-[12.500px]">
      <p><b>Config Attributes:</b> client</p><p>data_provider_type</p><p>data_provider_code</p><p>secret name for SFTP connection info</p><p>all non-sensitive config data, e.g. file</p><p>encoding, file delimiter</p>
    </div>
  </div>
);

const Canvas = () => (
  <div className="flex-1 h-full flex min-w-0">
    <div className="w-[263px] h-full bg-[#f1f2f6] shrink-0" />
    <div className="relative flex-1 h-full overflow-hidden border-l border-[#d6d8de] bg-white bg-[linear-gradient(#dcdde2_1px,transparent_1px),linear-gradient(90deg,#dcdde2_1px,transparent_1px),linear-gradient(#eceef1_1px,transparent_1px),linear-gradient(90deg,#eceef1_1px,transparent_1px)] bg-[size:37.6px_37.6px,37.6px_37.6px,7.52px_7.52px,7.52px_7.52px] bg-[position:0_27.3px,37.3px_0,0_27.3px,37.3px_0]">
      <ConfigBox />
      <DataTable />
      <Diagram />
      <div className="absolute left-[137px] bottom-[2px] w-[484px] h-[6px] rounded-full bg-[#b3b6be]/90" />
      <div className="absolute right-[2px] top-[240px] w-[6px] h-[200px] rounded-full bg-[#c5c7cd]" />
    </div>
  </div>
);

const BottomBar = () => (
  <div className="h-[30px] bg-[#f9fafc] shrink-0 rounded-b-[9px] flex items-center text-[#3a414a] text-[12.500px]">
    <List size={18} strokeWidth={1.3} className="ml-[11px]" />
    <LayoutGrid size={18} strokeWidth={1.1} className="ml-[15px]" />
    <div className="ml-[16px] w-[79px] h-[26px] self-start bg-[#656b78] rounded-b-[3px] text-[#f2f3f5] font-medium flex items-center justify-between px-[8px]"><span>Page 1</span><span className="w-0 h-0 border-l-[3.500px] border-r-[3.500px] border-t-[6px] border-l-transparent border-r-transparent border-t-white mb-[3px]" /></div>
    <CirclePlus size={18} strokeWidth={1} className="ml-[12px]" />
    <div className="ml-auto h-full flex items-center">
      <svg width="20" height="20" viewBox="0 0 20 20" fill="none" stroke="#333"><rect x="2" y="2" width="14" height="15" /><path d="M8 7L17 14L13 14.500L15 18.500L13.500 19L11.500 15L8.500 17.500Z" fill="#f9fafc" /></svg>
      <span className="ml-[4px] whitespace-nowrap">Selected objects</span>
      <span className="ml-[5px] w-[16px] text-center text-[#555]">0</span>
      <div className="ml-[8px] h-full border-l border-[#e2e4ea] w-[37px] flex items-center justify-center"><Layers size={18} strokeWidth={1.100} /></div>
      <div className="h-full border-l border-[#e2e4ea] w-[39px] flex items-center justify-center"><span className="w-[18px] h-[18px] rounded-full border border-[#333] flex items-center justify-center text-[11px] leading-none">A</span></div>
      <div className="h-full border-l border-[#e2e4ea] w-[141px] flex items-center pl-[11px]">
        <Minus size={15} strokeWidth={1.500} />
        <span className="ml-[19px] text-[12.500px]">51%</span>
        <span className="ml-[16px] w-0 h-0 border-l-[3px] border-r-[3px] border-t-[5px] border-l-transparent border-r-transparent border-t-[#333]" />
        <Plus size={16} strokeWidth={1.300} className="ml-[19px]" />
      </div>
      <div className="h-full border-l border-[#e2e4ea] w-[38px] flex items-center justify-center"><Maximize size={17} strokeWidth={1.100} /></div>
    </div>
  </div>
);

/* ---------- zoom bar ---------- */
const ZItem = ({ w, ml, icon, label, color = 'text-[#a9a9a9]' }) => (
  <div className={`${w} ${ml} shrink-0 flex flex-col items-center`}>
    <div className="h-[50px] flex items-center justify-center relative">{icon}</div>
    <span className={`h-[30px] text-[15.500px] leading-[24px] whitespace-nowrap ${color}`}>{label}</span>
  </div>
);
const Caret = ({ ml }) => (
  <div className={`w-[16px] h-[50px] ${ml} shrink-0 self-start flex items-center justify-center text-[#c9c9c9]`}><ChevronUp size={13} strokeWidth={2} /></div>
);
const ZoomBar = () => (
  <div className="h-[80px] bg-[#1a1a1a] flex shrink-0 [font-family:Lato,sans-serif]">
    <ZItem w="w-[80px]" ml="ml-[29px]" label="Unmute" icon={
      <svg width="36" height="38" viewBox="0 0 36 38" fill="none"><rect x="12" y="3" width="12" height="21" rx="6" fill="#a6a6a6" /><path d="M8 17Q8 28 18 28Q28 28 28 17M18 28V34M12 35H24" stroke="#a6a6a6" strokeWidth="2" /><path d="M5 36L29 1" stroke="#e5484d" strokeWidth="2" /></svg>} />
    <Caret />
    <ZItem w="w-[96px]" ml="ml-[35px]" label="Start Video" icon={
      <svg width="40" height="38" viewBox="0 0 40 38" fill="none"><rect x="2" y="8" width="24" height="22" rx="4" fill="#a6a6a6" /><path d="M28 15L37 9V29L28 23Z" fill="#a6a6a6" /><path d="M4 36L31 1" stroke="#e5484d" strokeWidth="2" /></svg>} />
    <Caret />
    <ZItem w="w-[110px]" ml="ml-[305px]" label="Participants" icon={
      <><svg width="36" height="30" viewBox="0 0 36 30" fill="#a6a6a6"><circle cx="12" cy="7" r="6" /><circle cx="26" cy="11" r="5" /><path d="M1 30V24Q1 16 12 16Q20 16 21 24V30Z" /><path d="M23 30V24Q23 20 21 18Q24 17 27 17Q35 17 35 24V30Z" /></svg>
        <span className="absolute left-[40px] text-[16px] text-[#a9a9a9]">5</span></>} />
    <Caret ml="ml-[16px]" />
    <ZItem w="w-[60px]" ml="ml-[47px]" label="Chat" icon={
      <svg width="32" height="30" viewBox="0 0 32 30" fill="#a6a6a6"><path d="M5 1H27Q31 1 31 5V17Q31 21 27 21H14L9 29V21H5Q1 21 1 17V5Q1 1 5 1Z" /></svg>} />
    <Caret ml="ml-[12px]" />
    <ZItem w="w-[120px]" ml="ml-[23.500px]" label="Share Screen" color="text-[#22d65f]" icon={
      <svg width="36" height="30" viewBox="0 0 36 30"><rect width="36" height="28" y="1" rx="4" fill="#22d65f" /><path d="M18 22V10M13 14L18 8L23 14" stroke="#111" strokeWidth="2.400" fill="none" /></svg>} />
    <ZItem w="w-[70px]" ml="ml-[38.500px]" label="Record" icon={
      <svg width="32" height="32" viewBox="0 0 32 32"><circle cx="16" cy="16" r="14.500" fill="none" stroke="#a6a6a6" strokeWidth="1.500" /><circle cx="16" cy="16" r="11.500" fill="#a6a6a6" /></svg>} />
    <ZItem w="w-[76px]" ml="ml-[46px]" label="Reactions" icon={
      <svg width="32" height="32" viewBox="0 0 32 32"><circle cx="14" cy="18" r="13.500" fill="#a6a6a6" /><circle cx="9.500" cy="15" r="1.800" fill="#1a1a1a" /><circle cx="18.500" cy="15" r="1.800" fill="#1a1a1a" /><path d="M8 21Q14 27 20 21" stroke="#1a1a1a" strokeWidth="1.800" fill="none" /><circle cx="26" cy="6" r="6" fill="#1a1a1a" /><path d="M26 1V10M21.500 5.500H30.500" stroke="#a6a6a6" strokeWidth="2" /></svg>} />
    <Caret ml="-ml-[3px]" />
    <ZItem w="w-[50px]" ml="ml-[45px]" label="Apps" icon={
      <svg width="26" height="26" viewBox="0 0 26 26" fill="none" stroke="#a6a6a6" strokeWidth="1.800"><circle cx="20" cy="6" r="4" /><circle cx="6" cy="20" r="4" /><path d="M12 2H6Q2 2 2 6V12M14 24H20Q24 24 24 20V14" /></svg>} />
    <ZItem w="w-[120px]" ml="ml-[48px]" label="Whiteboards" icon={
      <svg width="30" height="28" viewBox="0 0 30 28" fill="none"><path d="M8 26H4Q1 26 1 23V4Q1 1 4 1H25Q28 1 28 4V18" stroke="#a6a6a6" strokeWidth="1.800" /><path d="M13 20H29V26Q29 27 28 27H13L11 24Z" fill="#a6a6a6" /></svg>} />
    <div className="ml-auto mr-[18px] mt-[19px] w-[92px] h-[41px] rounded-[9px] bg-[#b52424] text-white font-bold text-[16px] flex items-center justify-center [font-family:'Open_Sans',sans-serif]">Leave</div>
  </div>
);

const MenuBar = () => (
  <div className="h-[23px] flex items-center text-white text-[12px] shrink-0">
    <svg width="12" height="15" viewBox="0 0 12 15" className="ml-[17px]" fill="#fff"><path d="M8.200 0C8.300 1.500 7 3 5.800 3C5.700 1.700 7 .2 8.200 0ZM11.500 11C11 12.500 9.700 14.600 8.500 14.600C7.500 14.600 7 14 6 14C5 14 4.400 14.600 3.500 14.600C2 14.600 0 11.500 0 8.500C0 5.500 2 4 3.700 4C4.700 4 5.400 4.700 6 4.700C6.600 4.700 7.500 3.900 8.800 4C9.500 4 10.700 4.300 11.400 5.400C9 7 9.500 10.200 11.500 11Z" /></svg>
    <div className="flex items-center gap-[18.500px] ml-[22px] whitespace-nowrap">
      <span className="font-bold">Chrome</span><span>File</span><span>Edit</span><span>View</span><span>History</span><span>Bookmarks</span><span>Profiles</span><span>Tab</span><span>Window</span><span>Help</span>
    </div>
    <div className="ml-auto flex items-center whitespace-nowrap">
      <svg width="18" height="14" viewBox="0 0 18 14" fill="#fff"><path d="M1 7H15Q15 13 8 13Q1 13 1 7ZM4 3H6V6H4ZM7 3H9V6H7ZM7 0H9V2.500H7ZM10 3H12V6H10ZM15 6Q16 4 18 5Q17 8 15 8Z" /></svg>
      <span className="ml-[18px] flex flex-col items-center leading-[9px]"><span className="text-[6.500px]">CPU</span><span className="text-[11.500px]">32%</span></span>
      <span className="ml-[19px] flex flex-col items-center leading-[9px]"><span className="text-[6.500px]">RAM</span><span className="text-[11.500px]">89%</span></span>
      <span className="ml-[19px] relative w-[20px] h-[16px]"><span className="absolute left-0 top-px w-[13px] h-[13px] rounded-full bg-[#8fb29a]" /><span className="absolute right-0 top-[3px] w-[11px] h-[11px] rounded-full bg-[#e0e0e0] border-[2px] border-[#c8353a]" /></span>
      <Play size={13} className="ml-[17.500px]" />
      <span className="ml-[18px] w-[13px] h-[13px] border border-white rounded-[2px]" />
      <span className="ml-[15.500px] w-[24px] h-[12px] border border-white rounded-[2px] flex items-center justify-center"><Zap size={9} fill="#fff" strokeWidth={0} /></span>
      <svg width="16" height="12" viewBox="0 0 16 12" className="ml-[18px]" fill="none" stroke="#fff" strokeWidth="1.500"><path d="M1 4Q8 -1 15 4M3.500 7Q8 3.500 12.500 7" /><circle cx="8" cy="10" r="1" fill="#fff" /></svg>
      <span className="ml-[14px] flex flex-col gap-[2px]"><i className="block w-[13px] h-[5px] bg-white rounded-full" /><i className="block w-[13px] h-[5px] border border-white rounded-full" /></span>
      <span className="ml-[3px] w-[4px] h-[4px] rounded-full bg-[#e08a3a]" />
      <span className="ml-[12px]">Thu Sep 22</span>
      <span className="ml-[7px] mr-[17px]">8:04 AM</span>
    </div>
  </div>
);

export default function App() {
  return (
    <div className="w-full h-[1552px] bg-white [font-family:Inter,sans-serif]">
      <div className="relative w-[1920px] h-[1080px] flex flex-col bg-[#1a1a1a]">
        <div className="h-[1000px] flex shrink-0">
          <div className="w-[70px] pl-[12px] pt-[12px] shrink-0">
            <div className="w-[36px] h-[36px] rounded-[6px] bg-[#252525] flex items-center justify-center">
              <svg width="20" height="22" viewBox="0 0 20 22"><path d="M10 1L19 4V11Q19 18 10 21Q1 18 1 11V4Z" fill="#22d65f" /><path d="M6 11L9 14L14 8" stroke="#123" strokeWidth="2" fill="none" /></svg>
            </div>
          </div>
          <div className="w-[1780px] h-full flex flex-col shrink-0 bg-[radial-gradient(ellipse_260px_70px_at_1140px_1000px,#6a0a90,transparent),linear-gradient(180deg,#33099a_0,#240680_5%,#1c0650_55%,#0a0218_97%)]">
            <MenuBar />
            <div className="ml-[30px] w-[1739px] h-[937px] flex flex-col shrink-0 overflow-hidden rounded-[9px] bg-[#f9fafc]">
              <TabStrip />
              <AddressBar />
              <LucidHeader />
              <Toolbar />
              <div className="h-[736px] flex shrink-0">
                <ShapePanel />
                <Canvas />
              </div>
              <BottomBar />
            </div>
          </div>
          <div className="w-[70px] shrink-0" />
        </div>
        <ZoomBar />
        <div className="absolute left-[684px] top-0 h-[33px] flex">
          <div className="w-[368px] bg-[#22d65f] rounded-bl-[4px] text-[#2c3a33] text-[17.800px] font-medium flex items-center justify-center whitespace-nowrap">You are viewing Blake Eggum's screen</div>
          <div className="w-[183px] bg-[#1f1f1f] rounded-br-[4px] text-white text-[15.500px] font-medium flex items-center pl-[43px] gap-[6px]"><span>View Options</span><ChevronDown size={13} /></div>
        </div>
        <div className="absolute left-[1825px] top-[8px] w-[83px] h-[39px] rounded-[8px] bg-[#2a2a2a] flex items-center justify-center gap-[7px] text-white text-[15px]">
          <svg width="16" height="18" viewBox="0 0 16 18" fill="#e0e0e0"><rect y="0" width="7" height="5" /><rect x="9" y="0" width="7" height="5" /><rect y="7" width="16" height="11" /></svg>
          <span>View</span>
        </div>
      </div>
    </div>
  );
}
